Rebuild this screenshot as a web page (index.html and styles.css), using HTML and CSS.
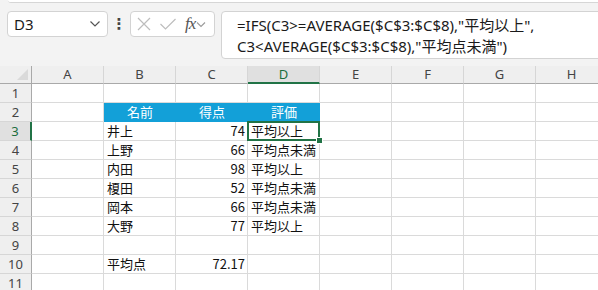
FILE: index.html
```html
<!DOCTYPE html>
<html lang="ja">
<head>
<meta charset="utf-8">
<link rel="stylesheet" href="styles.css">
</head>
<body>
<div class="app">
  <div class="ribbon-edge"></div>
  <div class="fbar">
    <div class="namebox">
      <span class="ref">D3</span>
      <svg class="chev" width="12" height="8" viewBox="0 0 12 8"><path d="M1.5 1.5 L6 6 L10.5 1.5" fill="none" stroke="#555" stroke-width="1.2"/></svg>
    </div>
    <div class="dots">⋮</div>
    <div class="iconbox">
      <svg class="ic" width="16" height="16" viewBox="0 0 16 16"><path d="M2 2 L14 14 M14 2 L2 14" stroke="#bdbdbd" stroke-width="1.2" fill="none"/></svg>
      <svg class="ic" width="18" height="16" viewBox="0 0 18 16"><path d="M1.5 8 L6.5 13 L16.5 3" stroke="#bdbdbd" stroke-width="1.2" fill="none"/></svg>
      <span class="fx">fx</span>
      <svg class="chev2" width="10" height="7" viewBox="0 0 10 7"><path d="M1 1.5 L5 5.5 L9 1.5" fill="none" stroke="#9a9a9a" stroke-width="1.1"/></svg>
    </div>
    <div class="formula">
      <div>=IFS(C3&gt;=AVERAGE($C$3:$C$8),"平均以上",</div>
      <div>C3&lt;AVERAGE($C$3:$C$8),"平均点未満")</div>
    </div>
  </div>
  <div class="sheet">
    <div class="corner"><span class="tri"></span></div>
    <div class="ch">A</div><div class="ch">B</div><div class="ch">C</div><div class="ch sel">D</div><div class="ch">E</div><div class="ch">F</div><div class="ch">G</div><div class="ch">H</div>

    <div class="rh">1</div><div class="c"></div><div class="c"></div><div class="c"></div><div class="c"></div><div class="c"></div><div class="c"></div><div class="c"></div><div class="c"></div>

    <div class="rh">2</div><div class="c"></div><div class="c hd">名前</div><div class="c hd">得点</div><div class="c hd">評価</div><div class="c"></div><div class="c"></div><div class="c"></div><div class="c"></div>

    <div class="rh sel">3</div><div class="c"></div><div class="c">井上</div><div class="c num">74</div><div class="c active">平均以上<span class="handle"></span></div><div class="c"></div><div class="c"></div><div class="c"></div><div class="c"></div>

    <div class="rh">4</div><div class="c"></div><div class="c">上野</div><div class="c num">66</div><div class="c">平均点未満</div><div class="c"></div><div class="c"></div><div class="c"></div><div class="c"></div>

    <div class="rh">5</div><div class="c"></div><div class="c">内田</div><div class="c num">98</div><div class="c">平均以上</div><div class="c"></div><div class="c"></div><div class="c"></div><div class="c"></div>

    <div class="rh">6</div><div class="c"></div><div class="c">榎田</div><div class="c num">52</div><div class="c">平均点未満</div><div class="c"></div><div class="c"></div><div class="c"></div><div class="c"></div>

    <div class="rh">7</div><div class="c"></div><div class="c">岡本</div><div class="c num">66</div><div class="c">平均点未満</div><div class="c"></div><div class="c"></div><div class="c"></div><div class="c"></div>

    <div class="rh">8</div><div class="c"></div><div class="c">大野</div><div class="c num">77</div><div class="c">平均以上</div><div class="c"></div><div class="c"></div><div class="c"></div><div class="c"></div>

    <div class="rh">9</div><div class="c"></div><div class="c"></div><div class="c"></div><div class="c"></div><div class="c"></div><div class="c"></div><div class="c"></div><div class="c"></div>

    <div class="rh">10</div><div class="c"></div><div class="c">平均点</div><div class="c num">72.17</div><div class="c"></div><div class="c"></div><div class="c"></div><div class="c"></div><div class="c"></div>

    <div class="rh">11</div><div class="c"></div><div class="c"></div><div class="c"></div><div class="c"></div><div class="c"></div><div class="c"></div><div class="c"></div><div class="c"></div>
  </div>
</div>
</body>
</html>
```

FILE: styles.css
```css
html, body {
  margin: 0;
  padding: 0;
}
body {
  background: #f3f3f3;
  width: 598px;
  height: 290px;
  overflow: hidden;
}
.app {
  width: 598px;
  height: 290px;
  overflow: hidden;
}
.ribbon-edge {
  height: 2px;
  margin-left: 8px;
  background: #fff;
  border-bottom: 1px solid #d6d6d6;
  border-bottom-left-radius: 6px;
}
.fbar {
  display: flex;
  align-items: flex-start;
  padding: 8px 0 0 7px;
  height: 55px;
}
.namebox {
  box-sizing: border-box;
  width: 101px;
  height: 26px;
  background: #fff;
  border: 1px solid #d3d3d3;
  border-radius: 4px;
  display: flex;
  align-items: center;
  justify-content: space-between;
  padding: 0 6px 0 6px;
}
.ref {
  font-family: "Noto Sans", "DejaVu Sans", sans-serif;
  font-size: 15px;
  color: #1a1a1a;
}
.dots {
  width: 22px;
  text-align: center;
  font-family: "DejaVu Sans", sans-serif;
  font-size: 15px;
  line-height: 26px;
  color: #444;
  font-weight: bold;
}
.iconbox {
  box-sizing: border-box;
  width: 85px;
  height: 26px;
  background: #fff;
  border: 1px solid #d3d3d3;
  border-radius: 4px;
  display: flex;
  align-items: center;
  padding-left: 5px;
  gap: 7px;
}
.fx {
  font-family: "Liberation Serif", serif;
  font-style: italic;
  font-size: 17px;
  color: #555;
  margin-left: 1px;
  letter-spacing: -1px;
}
.chev2 {
  margin-left: -6px;
}
.formula {
  box-sizing: border-box;
  margin-left: 6px;
  flex: 1;
  margin-right: -10px;
  height: 48px;
  background: #fff;
  border: 1px solid #d3d3d3;
  border-radius: 4px 0 0 4px;
  padding: 3px 0 0 15px;
  font-family: "Noto Sans", "Noto Sans CJK JP", sans-serif;
  font-size: 15px;
  line-height: 21px;
  color: #1a1a1a;
  white-space: nowrap;
}
.sheet {
  display: grid;
  grid-template-columns: 32px repeat(8, 72px);
  grid-template-rows: 18px repeat(11, 19px);
  width: 608px;
}
.corner {
  box-sizing: border-box;
  border-right: 1px solid #a9a9a9;
  border-bottom: 1px solid #a9a9a9;
  background: #efefef;
  position: relative;
}
.tri {
  position: absolute;
  right: 3px;
  bottom: 3px;
  width: 0;
  height: 0;
  border-left: 11px solid transparent;
  border-bottom: 11px solid #dadada;
}
.ch {
  box-sizing: border-box;
  background: #efefef;
  border-right: 1px solid #d6d6d6;
  border-bottom: 1px solid #a9a9a9;
  font-family: "Noto Sans", "DejaVu Sans", sans-serif;
  font-size: 13px;
  color: #444;
  text-align: center;
  line-height: 17px;
}
.ch.sel {
  background: #e0e0e0;
  color: #1b6d3d;
  border-bottom: 2px solid #217346;
  line-height: 16px;
}
.rh {
  box-sizing: border-box;
  background: #efefef;
  border-right: 1px solid #a9a9a9;
  border-bottom: 1px solid #d6d6d6;
  font-family: "Noto Sans", "DejaVu Sans", sans-serif;
  font-size: 13px;
  color: #444;
  text-align: center;
  line-height: 18px;
}
.rh.sel {
  background: #e0e0e0;
  color: #1b6d3d;
  border-right: 2px solid #217346;
}
.c {
  box-sizing: border-box;
  background: #fff;
  border-right: 1px solid #dadada;
  border-bottom: 1px solid #dadada;
  font-family: "Noto Sans CJK JP", sans-serif;
  font-size: 13px;
  line-height: 18px;
  color: #111;
  padding: 0 2px 0 3px;
  white-space: nowrap;
  position: relative;
}
.c.num {
  text-align: right;
}
.c.hd {
  background: #13a0d8;
  border-color: #13a0d8;
  color: #fff;
  text-align: center;
}
.c.active {
  z-index: 2;
}
.c.active::before {
  content: "";
  position: absolute;
  left: -1px;
  top: -1px;
  right: -1px;
  bottom: -1px;
  border: 2px solid #217346;
  pointer-events: none;
}
.handle {
  position: absolute;
  right: -4px;
  bottom: -4px;
  width: 5px;
  height: 5px;
  background: #217346;
  border: 1px solid #fff;
  z-index: 3;
}
```
